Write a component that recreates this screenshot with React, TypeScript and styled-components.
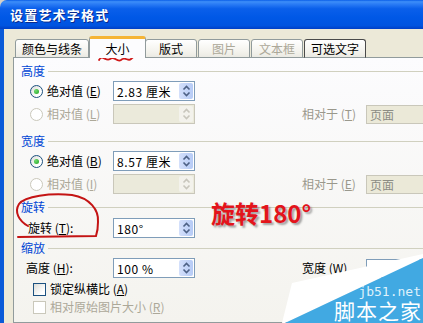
import styled, { createGlobalStyle } from "styled-components";

const GlobalStyle = createGlobalStyle`
  html, body {
    margin: 0;
    padding: 0;
    background: #fff;
  }
  body {
    width: 423px;
    height: 323px;
    overflow: hidden;
    font-family: "Noto Sans CJK SC", "Noto Sans", sans-serif;
    font-size: 12px;
    color: #000;
  }
`;

const Screen = styled.div`
  position: relative;
  width: 423px;
  height: 323px;
  overflow: hidden;
  background: #d4d0c8;
`;

const Window = styled.div`
  width: 470px;
  height: 100%;
  display: flex;
  flex-direction: column;
`;

const TitleBar = styled.div`
  flex: none;
  height: 29px;
  display: flex;
  align-items: center;
  padding-left: 10px;
  border-radius: 7px 7px 0 0;
  background: linear-gradient(
    to bottom,
    #0a5ee8 0%,
    #3d8ef8 6%,
    #2b7cf5 14%,
    #0a5fea 30%,
    #0058e6 60%,
    #0054e0 88%,
    #003fc6 100%
  );
  color: #fff;
  font-weight: 700;
  font-size: 13px;
  letter-spacing: 1.2px;
  text-shadow: 1px 1px 0 #0a2a8c;
`;

const Frame = styled.div`
  flex: 1;
  display: flex;
  border-left: 4px solid #0a5ad8;
  background: #ece9d8;
`;

const Client = styled.div`
  flex: 1;
  display: flex;
  flex-direction: column;
  padding: 7px 0 0 9px;
`;

const TabRow = styled.div`
  display: flex;
  align-items: flex-end;
  padding-left: 2px;
  margin-bottom: -1px;
  position: relative;
  z-index: 1;
`;

const Tab = styled.div<{ $active?: boolean; $disabled?: boolean; $hot?: boolean }>`
  box-sizing: border-box;
  height: ${(p) => (p.$active ? "22px" : "19px")};
  min-width: ${(p) => (p.$active ? "57px" : "52px")};
  margin: ${(p) => (p.$active ? "0 -1px" : "0 1px 0 0")};
  padding: 0 6px;
  display: flex;
  align-items: center;
  justify-content: center;
  border: 1px solid ${(p) => (p.$hot ? "#4a4a4a" : "#919b9c")};
  border-bottom: ${(p) => (p.$active ? "none" : "1px solid #919b9c")};
  border-top: ${(p) => (p.$active ? "3px solid #f5b435" : undefined)};
  border-radius: 3px 3px 0 0;
  background: ${(p) =>
    p.$active ? "#fcfcfe" : "linear-gradient(to bottom, #ffffff, #f3f2ec 70%, #ebeae3)"};
  color: ${(p) => (p.$disabled ? "#aca899" : "#000")};
  line-height: 14px;
  white-space: nowrap;
`;

const Panel = styled.div`
  flex: 1;
  display: flex;
  flex-direction: column;
  padding: 5px 0 0 7px;
  border: 1px solid #919b9c;
  background: linear-gradient(to bottom, #fcfcfe, #f4f3ee);
`;

const Legend = styled.div<{ $top: number }>`
  display: flex;
  align-items: center;
  gap: 3px;
  height: 16px;
  margin-top: ${(p) => p.$top}px;
  color: #0046d5;
  line-height: 16px;
  &::after {
    content: "";
    flex: 1;
    height: 1px;
    background: #d0d0bf;
  }
`;

const Row = styled.div<{ $top: number; $indent: number; $h?: number }>`
  display: flex;
  align-items: center;
  height: ${(p) => p.$h ?? 20}px;
  margin-top: ${(p) => p.$top}px;
  padding-left: ${(p) => p.$indent}px;
`;

const Field = styled.div<{ $w: number; $disabled?: boolean }>`
  width: ${(p) => p.$w}px;
  flex: none;
  display: flex;
  align-items: center;
  gap: 4px;
  color: ${(p) => (p.$disabled ? "#aca899" : "#000")};
  line-height: 16px;
  white-space: nowrap;
`;

const Radio = styled.span<{ $checked?: boolean; $disabled?: boolean }>`
  box-sizing: border-box;
  width: 13px;
  height: 13px;
  border-radius: 50%;
  border: 1px solid ${(p) => (p.$disabled ? "#cac8bb" : "#1c5180")};
  background: ${(p) =>
    p.$disabled ? "#fff" : "linear-gradient(135deg, #dcdcd7, #ffffff 70%)"};
  display: flex;
  align-items: center;
  justify-content: center;
  &::after {
    content: "";
    display: ${(p) => (p.$checked ? "block" : "none")};
    width: 5px;
    height: 5px;
    border-radius: 50%;
    background: radial-gradient(circle at 35% 35%, #70dc70, #21a121);
  }
`;

const Check = styled.span<{ $disabled?: boolean }>`
  box-sizing: border-box;
  width: 13px;
  height: 13px;
  border: 1px solid ${(p) => (p.$disabled ? "#cac8bb" : "#1c5180")};
  background: ${(p) =>
    p.$disabled ? "#fff" : "linear-gradient(135deg, #dcdcd7, #ffffff 75%)"};
`;

const Input = styled.div<{ $disabled?: boolean; $w: number }>`
  box-sizing: border-box;
  width: ${(p) => p.$w}px;
  height: 20px;
  flex: none;
  display: flex;
  align-items: stretch;
  border: 1px solid ${(p) => (p.$disabled ? "#c9c7ba" : "#7f9db9")};
  background: ${(p) => (p.$disabled ? "#ebeadb" : "#fff")};
`;

const InputText = styled.span`
  flex: 1;
  padding-left: 3px;
  display: flex;
  align-items: center;
  letter-spacing: 0.6px;
  color: #000;
  white-space: pre;
`;

const Spin = styled.span<{ $disabled?: boolean }>`
  width: 14px;
  margin: 1px;
  border-radius: 2px;
  display: flex;
  align-items: center;
  justify-content: center;
  background: ${(p) =>
    p.$disabled ? "#f3f2ec" : "linear-gradient(to right, #d4e0fb, #b6cbf6)"};
  color: ${(p) => (p.$disabled ? "#c8c6bc" : "#4d6185")};
`;

const RightLabel = styled.span<{ $enabled?: boolean }>`
  width: 64px;
  margin-left: 107px;
  flex: none;
  color: ${(p) => (p.$enabled ? "#000" : "#9a988c")};
  white-space: nowrap;
  line-height: 16px;
`;

const Combo = styled.div<{ $plain?: boolean }>`
  box-sizing: border-box;
  width: 70px;
  height: 19px;
  flex: none;
  padding-left: 3px;
  display: flex;
  align-items: center;
  border: 1px solid ${(p) => (p.$plain ? "#7f9db9" : "#c9c7ba")};
  background: ${(p) => (p.$plain ? "#fff" : "#ebe9d8")};
  color: #8c8c84;
`;

const Annotation = styled.svg`
  position: absolute;
  left: 0;
  top: 0;
  pointer-events: none;
`;

const BigNote = styled.div`
  position: absolute;
  left: 211px;
  top: 198px;
  font-size: 24px;
  font-weight: 700;
  line-height: 30px;
  color: #e3141b;
  text-shadow: 2px 2px 2px rgba(0, 0, 0, 0.35);
`;

const Watermark = styled.div`
  position: absolute;
  left: 280px;
  top: 250px;
  width: 143px;
  height: 73px;
  pointer-events: none;
`;

const MarkSite = styled.span`
  position: absolute;
  right: 2px;
  top: 35px;
  font-family: "DejaVu Sans Mono", "Liberation Mono", monospace;
  font-size: 13px;
  line-height: 13px;
  color: #dff1fb;
`;

const MarkName = styled.span`
  position: absolute;
  right: 1px;
  top: 49px;
  font-size: 21px;
  line-height: 23px;
  color: #fff;
  letter-spacing: 1px;
`;

function SpinArrows() {
  return (
    <svg width="9" height="14" viewBox="0 0 9 14">
      <path d="M1.5 5.5 L4.5 2.5 L7.5 5.5" fill="none" stroke="currentColor" strokeWidth="1.6" />
      <path d="M1.5 8.5 L4.5 11.5 L7.5 8.5" fill="none" stroke="currentColor" strokeWidth="1.6" />
    </svg>
  );
}

function SpinBox({ value, disabled }: { value?: string; disabled?: boolean }) {
  return (
    <Input $w={82} $disabled={disabled}>
      <InputText>{value ?? ""}</InputText>
      <Spin $disabled={disabled}>
        <SpinArrows />
      </Spin>
    </Input>
  );
}

function Key({ k }: { k: string }) {
  return (
    <>
      {" ("}
      <u>{k}</u>
      {")"}
    </>
  );
}

const tabs = [
  { label: "颜色与线条" },
  { label: "大小", active: true },
  { label: "版式" },
  { label: "图片", disabled: true },
  { label: "文本框", disabled: true },
  { label: "可选文字", hot: true },
];

export default function App() {
  return (
    <Screen>
      <GlobalStyle />
      <Window>
        <TitleBar>设置艺术字格式</TitleBar>
        <Frame>
          <Client>
            <TabRow>
              {tabs.map((t) => (
                <Tab key={t.label} $active={t.active} $disabled={t.disabled} $hot={t.hot}>
                  {t.label}
                </Tab>
              ))}
            </TabRow>
            <Panel>
              <Legend $top={0}>高度</Legend>
              <Row $top={2} $indent={9}>
                <Field $w={83}>
                  <Radio $checked />
                  <span>
                    绝对值<Key k="E" />
                  </span>
                </Field>
                <SpinBox value="2.83 厘米" />
              </Row>
              <Row $top={3} $indent={9}>
                <Field $w={83} $disabled>
                  <Radio $disabled />
                  <span>
                    相对值<Key k="L" />
                  </span>
                </Field>
                <SpinBox disabled />
                <RightLabel>
                  相对于<Key k="T" />
                </RightLabel>
                <Combo>页面</Combo>
              </Row>

              <Legend $top={9}>宽度</Legend>
              <Row $top={2} $indent={9}>
                <Field $w={83}>
                  <Radio $checked />
                  <span>
                    绝对值<Key k="B" />
                  </span>
                </Field>
                <SpinBox value="8.57 厘米" />
              </Row>
              <Row $top={3} $indent={9}>
                <Field $w={83} $disabled>
                  <Radio $disabled />
                  <span>
                    相对值<Key k="I" />
                  </span>
                </Field>
                <SpinBox disabled />
                <RightLabel>
                  相对于<Key k="E" />
                </RightLabel>
                <Combo>页面</Combo>
              </Row>

              <Legend $top={5}>旋转</Legend>
              <Row $top={3} $indent={7}>
                <Field $w={85}>
                  <span>
                    旋转<Key k="T" />:
                  </span>
                </Field>
                <SpinBox value="180°" />
              </Row>

              <Legend $top={2}>缩放</Legend>
              <Row $top={2} $indent={5}>
                <Field $w={87}>
                  <span>
                    高度<Key k="H" />:
                  </span>
                </Field>
                <SpinBox value="100 %" />
                <RightLabel $enabled>
                  宽度<Key k="W" />
                </RightLabel>
                <Combo $plain />
              </Row>
              <Row $top={3} $indent={12} $h={16}>
                <Field $w={200}>
                  <Check />
                  <span>
                    锁定纵横比<Key k="A" />
                  </span>
                </Field>
              </Row>
              <Row $top={2} $indent={12} $h={16}>
                <Field $w={200} $disabled>
                  <Check $disabled />
                  <span>
                    相对原始图片大小<Key k="R" />
                  </span>
                </Field>
              </Row>
            </Panel>
          </Client>
        </Frame>
      </Window>

      <Annotation width="423" height="323" viewBox="0 0 423 323">
        <path
          d="M99 60 C102 54, 106 62, 110 59 C114 55, 117 63, 121 60 C125 56, 128 62, 131 59 C133 57, 135 56, 136 57"
          fill="none"
          stroke="#d01818"
          strokeWidth="1.8"
          strokeLinecap="round"
        />
        <path
          d="M28 226 C19 221, 14 212, 19 204 C25 196, 50 193, 72 195 C90 198, 99 210, 98 222 C98 228, 97 233, 96 236 L18 237"
          fill="none"
          stroke="#c41414"
          strokeWidth="2"
          strokeLinecap="round"
        />
      </Annotation>

      <BigNote>旋转180°</BigNote>

      <Watermark>
        <svg width="143" height="73" viewBox="0 0 143 73">
          <polygon points="12,33 143,4 143,8 5,73 2,73" fill="#ffffff" />
          <polygon points="143,8 143,73 5,73" fill="#41a9e2" />
        </svg>
        <MarkSite>jb51.net</MarkSite>
        <MarkName>脚本之家</MarkName>
      </Watermark>
    </Screen>
  );
}
